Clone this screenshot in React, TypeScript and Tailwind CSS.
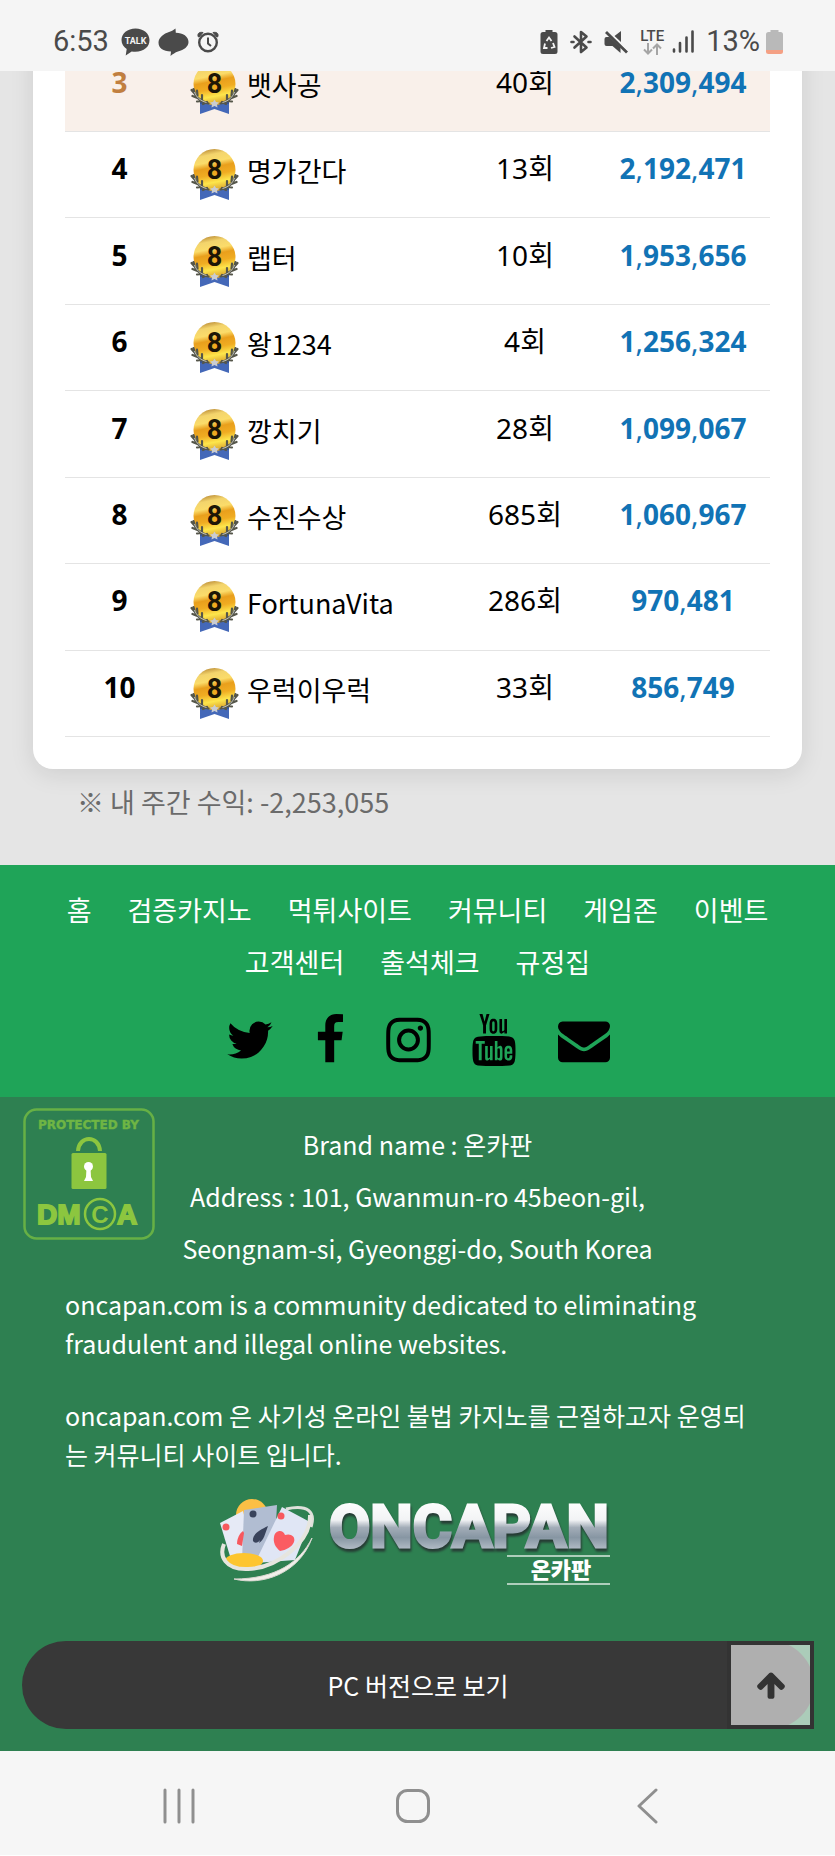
import { TfiYoutube } from "react-icons/tfi";

interface Player {
  rank: number;
  name: string;
  count: number;
  profit: string;
}

const players: Player[] = [
  { rank: 3, name: "뱃사공", count: 40, profit: "2,309,494" },
  { rank: 4, name: "명가간다", count: 13, profit: "2,192,471" },
  { rank: 5, name: "랩터", count: 10, profit: "1,953,656" },
  { rank: 6, name: "왕1234", count: 4, profit: "1,256,324" },
  { rank: 7, name: "깡치기", count: 28, profit: "1,099,067" },
  { rank: 8, name: "수진수상", count: 685, profit: "1,060,967" },
  { rank: 9, name: "FortunaVita", count: 286, profit: "970,481" },
  { rank: 10, name: "우럭이우럭", count: 33, profit: "856,749" },
];

const menu = [
  "홈",
  "검증카지노",
  "먹튀사이트",
  "커뮤니티",
  "게임존",
  "이벤트",
  "고객센터",
  "출석체크",
  "규정집",
];

// Phone status bar
function StatusBar() {
  return (
    <header className="sticky top-0 z-10 flex h-[71px] items-center justify-between bg-[#f5f5f5] pt-3 pr-[52px] pl-[53px] font-['Roboto',sans-serif] text-[29px] leading-none text-[#4a4a4a]">
      <div className="flex items-center gap-2">
        <span className="mr-1">6:53</span>
        <svg width="29" height="28" viewBox="0 0 29 28" aria-hidden="true">
          <path d="M14.5 0.500C6.500.5.5 5.500.5 12c0 4 2.200 7 5.200 9l-1 6.500 6-4c11 1.500 17.800-4 17.800-11.500C28.500 5.500 22.500.5 14.500.5z" fill="#4a4a4a" />
          <text x="14.500" y="15.500" textAnchor="middle" fontSize="9" fontWeight="700" fill="#f5f5f5" fontFamily="Roboto">TALK</text>
        </svg>
        <svg width="31" height="28" viewBox="0 0 31 28" aria-hidden="true">
          <path d="M17.500.5L17.800 4.800C25 5 30.500 8.500 30.500 14c0 4.500-4.500 8-10.500 9.500-3 1-5 2.500-7.500 4.500l.5-4.500C5 23.500.5 20 .5 14.500.5 9.500 6 5.500 11 4c3-1 4.500-2 6.500-3.500z" fill="#4a4a4a" />
        </svg>
        <svg width="22" height="22" viewBox="0 0 22 22" fill="none" stroke="#4a4a4a" strokeWidth="2.400" aria-hidden="true">
          <circle cx="11" cy="11.500" r="8.800" />
          <path d="M1 5.500C.5 2.500 2 .8 6 1.500L2 6zM21 5.500c.5-3-1-4.700-5-4L20 6z" fill="#4a4a4a" strokeWidth="1" />
          <path d="M11 6.500v6l3 2.500" strokeWidth="2" />
        </svg>
      </div>

      <div className="flex items-center">
        <svg width="18" height="24" viewBox="0 0 18 24" aria-hidden="true">
          <path d="M5.500 0h7v2H15a2.500 2.500 0 0 1 2.500 2.500v17A2.500 2.500 0 0 1 15 24H3a2.500 2.500 0 0 1-2.500-2.500v-17A2.500 2.500 0 0 1 3 2h2.500z" fill="#4a4a4a" />
          <path d="M6.500 11L9 7.500l2.500 3.500M13 13l1.500 4-3.500 1M7.500 18H4l1-4.500" fill="none" stroke="#f5f5f5" strokeWidth="1.800" />
        </svg>
        <svg className="ml-3" width="22" height="24" viewBox="0 0 22 24" fill="none" stroke="#4a4a4a" strokeWidth="2.600" strokeLinejoin="round" strokeLinecap="round" aria-hidden="true">
          <path d="M4.500 6.500l12 11-5.500 4.500V2l5.500 4.500-12 11" />
          <path d="M1.500 12h2M18.500 12h2" />
        </svg>
        <svg className="ml-3" width="24" height="24" viewBox="0 0 24 24" aria-hidden="true">
          <path d="M0.500 9q0-2 2-2h3l11 10.500V23L8.500 16h-6q-2 0-2-2zM17 1v11L10.500 6z" fill="#4a4a4a" />
          <path d="M2 2l21 20.500" stroke="#4a4a4a" strokeWidth="2.800" />
          <path d="M3.800.8L24 20.500" stroke="#f5f5f5" strokeWidth="1" />
        </svg>
        <div className="ml-3 flex flex-col items-center">
          <span className="text-[15px] leading-[14px] font-medium">LTE</span>
          <svg width="19" height="12" viewBox="0 0 19 12" fill="none" stroke="#a5a5a5" strokeWidth="2" aria-hidden="true">
            <path d="M5 0v10M1 6.500l4 4 4-4M14 12V2M10 5.500l4-4 4 4" />
          </svg>
        </div>
        <svg className="ml-2" width="22" height="23" viewBox="0 0 22 23" fill="none" stroke="#4a4a4a" strokeWidth="2.600" strokeLinecap="round" aria-hidden="true">
          <path d="M2 19.500v2M8 13v8.500M14.500 7.500v14M20.500 1.500v20" />
        </svg>
        <span className="ml-3">13%</span>
        <svg className="ml-1.5" width="17" height="24" viewBox="0 0 17 24" aria-hidden="true">
          <path d="M4.500 0h8v2h2A2.500 2.500 0 0 1 17 4.500V20H0V4.500A2.500 2.500 0 0 1 2.500 2h2z" fill="#b9b9b9" />
          <path d="M0 20h17v1.500a2.500 2.500 0 0 1-2.500 2.500h-12A2.500 2.500 0 0 1 0 21.500z" fill="#f4a084" />
        </svg>
      </div>
    </header>
  );
}

function Medal() {
  return (
    <svg className="shrink-0" width="49" height="51" viewBox="0 0 49 51" aria-hidden="true">
      <defs>
        <linearGradient id="gold" x1="0.300" y1="0" x2="0.500" y2="1">
          <stop offset="0" stopColor="#b98a35" />
          <stop offset="0.150" stopColor="#f3d46c" />
          <stop offset="0.320" stopColor="#fbdc6a" />
          <stop offset="0.450" stopColor="#e99f1c" />
          <stop offset="0.620" stopColor="#f0ac22" />
          <stop offset="0.800" stopColor="#fde64c" />
          <stop offset="1" stopColor="#d9a02c" />
        </linearGradient>
      </defs>
      <path d="M10 37h29v14l-14.500-5L10 51z" fill="#4468b8" />
      <path d="M10 37h29v4H10z" fill="#35549a" />
      <circle cx="24.500" cy="21" r="21" fill="url(#gold)" />
      <g fill="none" stroke="#55564a" strokeWidth="2.200" strokeLinecap="round">
        <path d="M3.500 26c1 7 5 12 15 14.500M1.500 27l3.500 4M2.500 33l5 2M7 38.500l5-.5M7 27.500l.5 5M12 32v5M13 41l4-2" />
        <path d="M45.500 26c-1 7-5 12-15 14.500M47.500 27L44 31M46.500 33l-5 2M42 38.500l-5-.5M42 27.500l-.5 5M37 32v5M36 41l-4-2" />
      </g>
      <path d="M4.500 29c2 5 5 8.500 12 10.500M44.500 29c-2 5-5 8.500-12 10.500" fill="none" stroke="#c6c6bd" strokeWidth="1" />
      <path d="M24.500 36.500l1.500 2.500 3 .5-2 2 .5 3-3-1.500-3 1.500.5-3-2-2 3-.5z" fill="#c9ccd2" />
      <text x="24.500" y="30" textAnchor="middle" fontSize="27" fontWeight="700" fill="#1d1606" fontFamily="Roboto">8</text>
    </svg>
  );
}

// Digits are bold, separators stay regular
function Profit({ value }: { value: string }) {
  return (
    <>
      {value.split(",").map((group, index) => (
        <span key={index}>
          {index > 0 && <span className="font-normal">,</span>}
          {group}
        </span>
      ))}
    </>
  );
}

function SocialLinks() {
  return (
    <div className="mt-[26px] flex items-center justify-center gap-[41px] text-black">
      <a href="#" aria-label="Twitter">
        <svg width="48" height="52" viewBox="64 0 1664 1792" fill="currentColor">
          <path d="M1684 408q-67 98-162 167 1 14 1 42 0 130-38 259.500t-115.500 248.500-184.500 210.500-258 146-323 54.500q-271 0-496-145 35 4 78 4 225 0 401-138-105-2-188-64.500t-114-159.500q33 5 61 5 43 0 85-11-112-23-185.500-111.500t-73.500-205.500v-4q68 38 146 41-66-44-105-115t-39-154q0-88 44-163 121 149 294.500 238.500t371.500 99.500q-8-38-8-74 0-134 94.500-228.500t228.500-94.500q140 0 236 102 109-21 205-78-37 115-142 178 93-10 186-50z" />
        </svg>
      </a>
      <a href="#" aria-label="Facebook">
        <svg width="30" height="52" viewBox="384 0 1024 1792" fill="currentColor">
          <path d="M1343 12v264h-157q-86 0-116 36t-30 108v189h293l-39 296h-254v759h-306v-759h-255v-296h255v-218q0-186 104-288.500t277-102.500q147 0 228 12z" />
        </svg>
      </a>
      <a href="#" aria-label="Instagram">
        <svg width="45" height="52" viewBox="128 0 1536 1792" fill="currentColor">
          <path d="M1152 896q0-106-75-181t-181-75-181 75-75 181 75 181 181 75 181-75 75-181zm138 0q0 164-115 279t-279 115-279-115-115-279 115-279 279-115 279 115 115 279zm108-410q0 38-27 65t-65 27-65-27-27-65 27-65 65-27 65 27 27 65zm-502-220q-7 0-76.500-.5t-105.500 0-96.500 3-103 10-71.500 18.500q-50 20-88 58t-58 88q-11 29-18.500 71.500t-10 103-3 96.500 0 105.500.5 76.500-.5 76.500 0 105.500 3 96.500 10 103 18.500 71.500q20 50 58 88t88 58q29 11 71.500 18.500t103 10 96.500 3 105.500 0 76.500-.5 76.500.5 105.500 0 96.500-3 103-10 71.500-18.500q50-20 88-58t58-88q11-29 18.500-71.500t10-103 3-96.500 0-105.500-.5-76.500.5-76.500 0-105.500-3-96.500-10-103-18.500-71.500q-20-50-58-88t-88-58q-29-11-71.500-18.500t-103-10-96.500-3-105.500 0-76.500.5zm768 630q0 229-5 317-10 208-124 322t-322 124q-88 5-317 5t-317-5q-208-10-322-124t-124-322q-5-88-5-317t5-317q10-208 124-322t322-124q88-5 317-5t317 5q208 10 322 124t124 322q5 88 5 317z" />
        </svg>
      </a>
      <a href="#" aria-label="YouTube" className="flex w-[45px] justify-center">
        <TfiYoutube className="shrink-0" size={52} />
      </a>
      <a href="#" aria-label="Email">
        <svg width="52" height="52" viewBox="0 0 1792 1792" fill="currentColor">
          <path d="M1792 710v794q0 66-47 113t-113 47h-1472q-66 0-113-47t-47-113v-794q44 49 101 87 362 246 497 345 57 42 92.500 65.500t94.500 48 110 24.500h2q51 0 110-24.500t94.500-48 92.500-65.500q170-123 498-345 57-39 100-87zm0-294q0 79-49 151t-122 123q-376 261-468 325-10 7-42.500 31t-54 38.500-52 32.500-57.500 27-50 9h-2q-23 0-50-9t-57.500-27-52-32.500-54-38.500-42.500-31q-91-64-262-182.500t-205-142.500q-62-42-117-115.500t-55-136.500q0-78 41.500-130t118.500-52h1472q65 0 112.500 47t47.500 113z" />
        </svg>
      </a>
    </div>
  );
}

function DmcaBadge() {
  return (
    <svg width="132" height="132" viewBox="0 0 132 132" role="img" aria-label="Protected by DMCA">
      <rect x="1.500" y="1.500" width="129" height="129" rx="12" fill="none" stroke="#67b045" strokeWidth="2.500" />
      <text x="65.500" y="21" textAnchor="middle" fontSize="12" fontWeight="700" fill="#6fb544" stroke="#6fb544" strokeWidth="0.400" fontFamily="DejaVu Sans">PROTECTED BY</text>
      <path d="M55 43c1-16 21-16 22 0" fill="none" stroke="#8cc63f" strokeWidth="4" />
      <rect x="48.500" y="45" width="35" height="36" rx="1.500" fill="#8cc63f" />
      <circle cx="65.500" cy="58.500" r="4.500" fill="#fff" />
      <path d="M63.500 60h4l.5 9 2 4H61l2-4z" fill="#fff" />
      <text x="14" y="116" fontSize="28" fontWeight="700" fill="#8cc63f" stroke="#8cc63f" strokeWidth="1.800" fontFamily="Liberation Sans">DM</text>
      <circle cx="77" cy="106" r="15" fill="none" stroke="#8cc63f" strokeWidth="2.500" />
      <text x="77" y="114.500" textAnchor="middle" fontSize="24" fontWeight="700" fill="#8cc63f" fontFamily="Liberation Sans">C</text>
      <text x="94" y="116" fontSize="28" fontWeight="700" fill="#8cc63f" stroke="#8cc63f" strokeWidth="1.800" fontFamily="Liberation Sans">A</text>
    </svg>
  );
}

function Logo() {
  return (
    <svg width="400" height="92" viewBox="0 0 400 92" role="img" aria-label="ONCAPAN 온카판">
      <defs>
        <linearGradient id="steel" gradientUnits="userSpaceOnUse" x1="0" y1="4" x2="0" y2="54">
          <stop offset="0" stopColor="#ffffff" />
          <stop offset="0.400" stopColor="#f2f3f5" />
          <stop offset="0.550" stopColor="#a3adb8" />
          <stop offset="0.750" stopColor="#8796a3" />
          <stop offset="1" stopColor="#b4bec8" />
        </linearGradient>
      </defs>
      <path d="M68 13c22-5 30 3 25 18" fill="none" stroke="#dfe0db" strokeWidth="3" />
      <circle cx="34" cy="19" r="16" fill="#fbbf45" />
      <path d="M2 27l23-12 12 49-22 6z" fill="#e6eaf6" />
      <path d="M26 14l33-5-3 54-32 2z" fill="#b1bdd2" />
      <path d="M64 11l28 15-15 38-40 3z" fill="#e0e6f5" />
      <path d="M25 35c-4 3-6 8-6 13l5 2 2-13z" fill="#f7585e" />
      <path d="M50 30c-8 4-16 8-15 15 2 3 5 2 7-1l-1 3c5-3 6-9 9-17z" fill="#39435b" />
      <circle cx="8" cy="31" r="3.500" fill="#f7585e" />
      <circle cx="35" cy="18" r="3.500" fill="#39435b" />
      <circle cx="63" cy="20" r="3.500" fill="#f7585e" />
      <path d="M56 41c1-7 9-8 11-2 5-2 11 1 9 7-2 5-8 8-14 9-5-4-7-9-6-14z" fill="#fb5c62" />
      <ellipse cx="26" cy="65" rx="19" ry="8" fill="#fdc52f" />
      <path d="M6 48C1 60 7 74 30 73c28-1 63-26 62-54" fill="none" stroke="#e6e5df" strokeWidth="4" />
      <path d="M16 83c28 7 65-5 78-41-12 24-36 41-78 41z" fill="#f1f0ea" stroke="#d8d7d0" strokeWidth="1" />
      <g aria-hidden="true" style={{ filter: "drop-shadow(1px 3px 1px #263b34)" }}>
        <text x="111" y="51" fontSize="60" fontWeight="700" fill="url(#steel)" stroke="url(#steel)" strokeWidth="3" fontFamily="Roboto">ONCAPAN</text>
      </g>
      <path d="M289 60h103M289 88h103" stroke="#d9e8de" strokeWidth="1.500" />
      <text x="343" y="82" textAnchor="middle" fontSize="22" fontWeight="900" fill="#fff" fontFamily="'Noto Sans CJK KR'">온카판</text>
    </svg>
  );
}

// Android navigation buttons
function NavigationBar() {
  return (
    <nav aria-label="System" className="grid h-[104px] grid-cols-3 items-center justify-items-center bg-[#f6f6f6] pt-1.5 pr-[71px] pl-[62px] text-[#8f8f8f]">
      <button type="button" aria-label="Recent apps">
        <svg width="36" height="36" viewBox="0 0 36 36" fill="none" stroke="currentColor" strokeWidth="3" strokeLinecap="round">
          <path d="M4 2v32M18 2v32M32 2v32" />
        </svg>
      </button>
      <button type="button" aria-label="Home">
        <svg width="36" height="36" viewBox="0 0 36 36" fill="none" stroke="currentColor" strokeWidth="3">
          <rect x="2.500" y="2.500" width="31" height="31" rx="10" />
        </svg>
      </button>
      <button type="button" aria-label="Back">
        <svg width="36" height="36" viewBox="0 0 36 36" fill="none" stroke="currentColor" strokeWidth="3" strokeLinecap="round" strokeLinejoin="round">
          <path d="M27 2L10 18l17 16" />
        </svg>
      </button>
    </nav>
  );
}

export default function App() {
  return (
    <div className="bg-[#e5e5e5] font-['Noto_Sans_CJK_KR',sans-serif] text-[27px] leading-[39px] text-black">
      <StatusBar />

      {/* Weekly ranking, scrolled under the status bar */}
      <main className="-mt-[25px] px-[33px] pb-[44px]">
        <section className="rounded-b-[20px] bg-white px-8 pb-8 shadow-[0_5px_25px_rgba(0,0,0,0.1)]">
          <table className="h-[691px] w-full table-fixed border-collapse">
            <colgroup>
              <col className="w-[109px]" />
              <col />
              <col className="w-[142px]" />
              <col className="w-[174px]" />
            </colgroup>
            <tbody>
              {players.map((player: Player) => (
                <tr
                  key={player.rank}
                  className={
                    player.rank === 3
                      ? "border-b border-[#e4e4e4] bg-[#f9f0ea] text-[#c17f3f]"
                      : "border-b border-[#e4e4e4]"
                  }
                >
                  <td className="pb-3 text-center font-['Noto_Sans',sans-serif] text-[28px] font-bold">
                    {player.rank}
                  </td>
                  <td className="pl-4 text-black">
                    <div className="flex items-center gap-2">
                      <Medal />
                      <span className="pb-2">{player.name}</span>
                    </div>
                  </td>
                  <td className="pb-3 text-center font-['Noto_Sans','Noto_Sans_CJK_KR',sans-serif] text-[28px] text-black">
                    {player.count}회
                  </td>
                  <td className="pb-3 text-center font-['Noto_Sans',sans-serif] text-[28px] font-bold text-[#1173b5]">
                    <Profit value={player.profit} />
                  </td>
                </tr>
              ))}
            </tbody>
          </table>
        </section>
        <p className="mt-[13px] pl-11 text-[#6b6b6b]">※ 내 주간 수익: -2,253,055</p>
      </main>

      <footer>
        <div className="bg-[#1fa458] pt-[19px] pb-[31px] text-white">
          <nav className="flex flex-wrap justify-center gap-x-9 px-8 leading-[52px]">
            {menu.map((item) => (
              <a key={item} href="#">
                {item}
              </a>
            ))}
          </nav>
          <SocialLinks />
        </div>

        <div className="relative bg-[#2e8051] pt-[21px] pb-[22px] text-[25px] leading-[39px] text-white">
          <a href="#" className="absolute top-[11px] left-[23px]">
            <DmcaBadge />
          </a>
          <address className="text-center leading-[52px] not-italic">
            Brand name : 온카판
            <br />
            Address : 101, Gwanmun-ro 45beon-gil,
            <br />
            Seongnam-si, Gyeonggi-do, South Korea
          </address>
          <div className="pt-[11px] pr-[74px] pl-[65px]">
            <p>
              oncapan.com is a community dedicated to eliminating fraudulent and illegal online websites.
            </p>
            <p className="mt-[33px]">
              oncapan.com 은 사기성 온라인 불법 카지노를 근절하고자 운영되는 커뮤니티 사이트 입니다.
            </p>
          </div>
          <div className="mt-[22px] flex justify-center">
            <Logo />
          </div>

          <div className="relative mt-[53px] mr-[21px] ml-[22px] flex">
            <button type="button" className="h-[88px] w-full rounded-full bg-[#383838]">
              PC 버전으로 보기
            </button>
            <button
              type="button"
              aria-label="맨 위로"
              className="absolute top-0 right-0 flex h-[88px] w-[87px] items-center justify-center border-4 border-[#333] bg-white/60 bg-clip-padding text-[#333]"
            >
              <svg width="32" height="32" viewBox="0 0 1792 1792" fill="currentColor">
                <path d="M1675 971q0 51-37 90l-75 75q-38 38-91 38-54 0-90-38l-294-293v704q0 52-37.500 84.500t-90.500 32.500h-128q-53 0-90.500-32.500t-37.500-84.500v-704l-294 293q-36 38-90 38t-90-38l-75-75q-38-38-38-90 0-53 38-91l651-651q35-37 90-37 54 0 91 37l651 651q37 39 37 91z" />
              </svg>
            </button>
          </div>
        </div>
      </footer>

      <NavigationBar />
    </div>
  );
}
